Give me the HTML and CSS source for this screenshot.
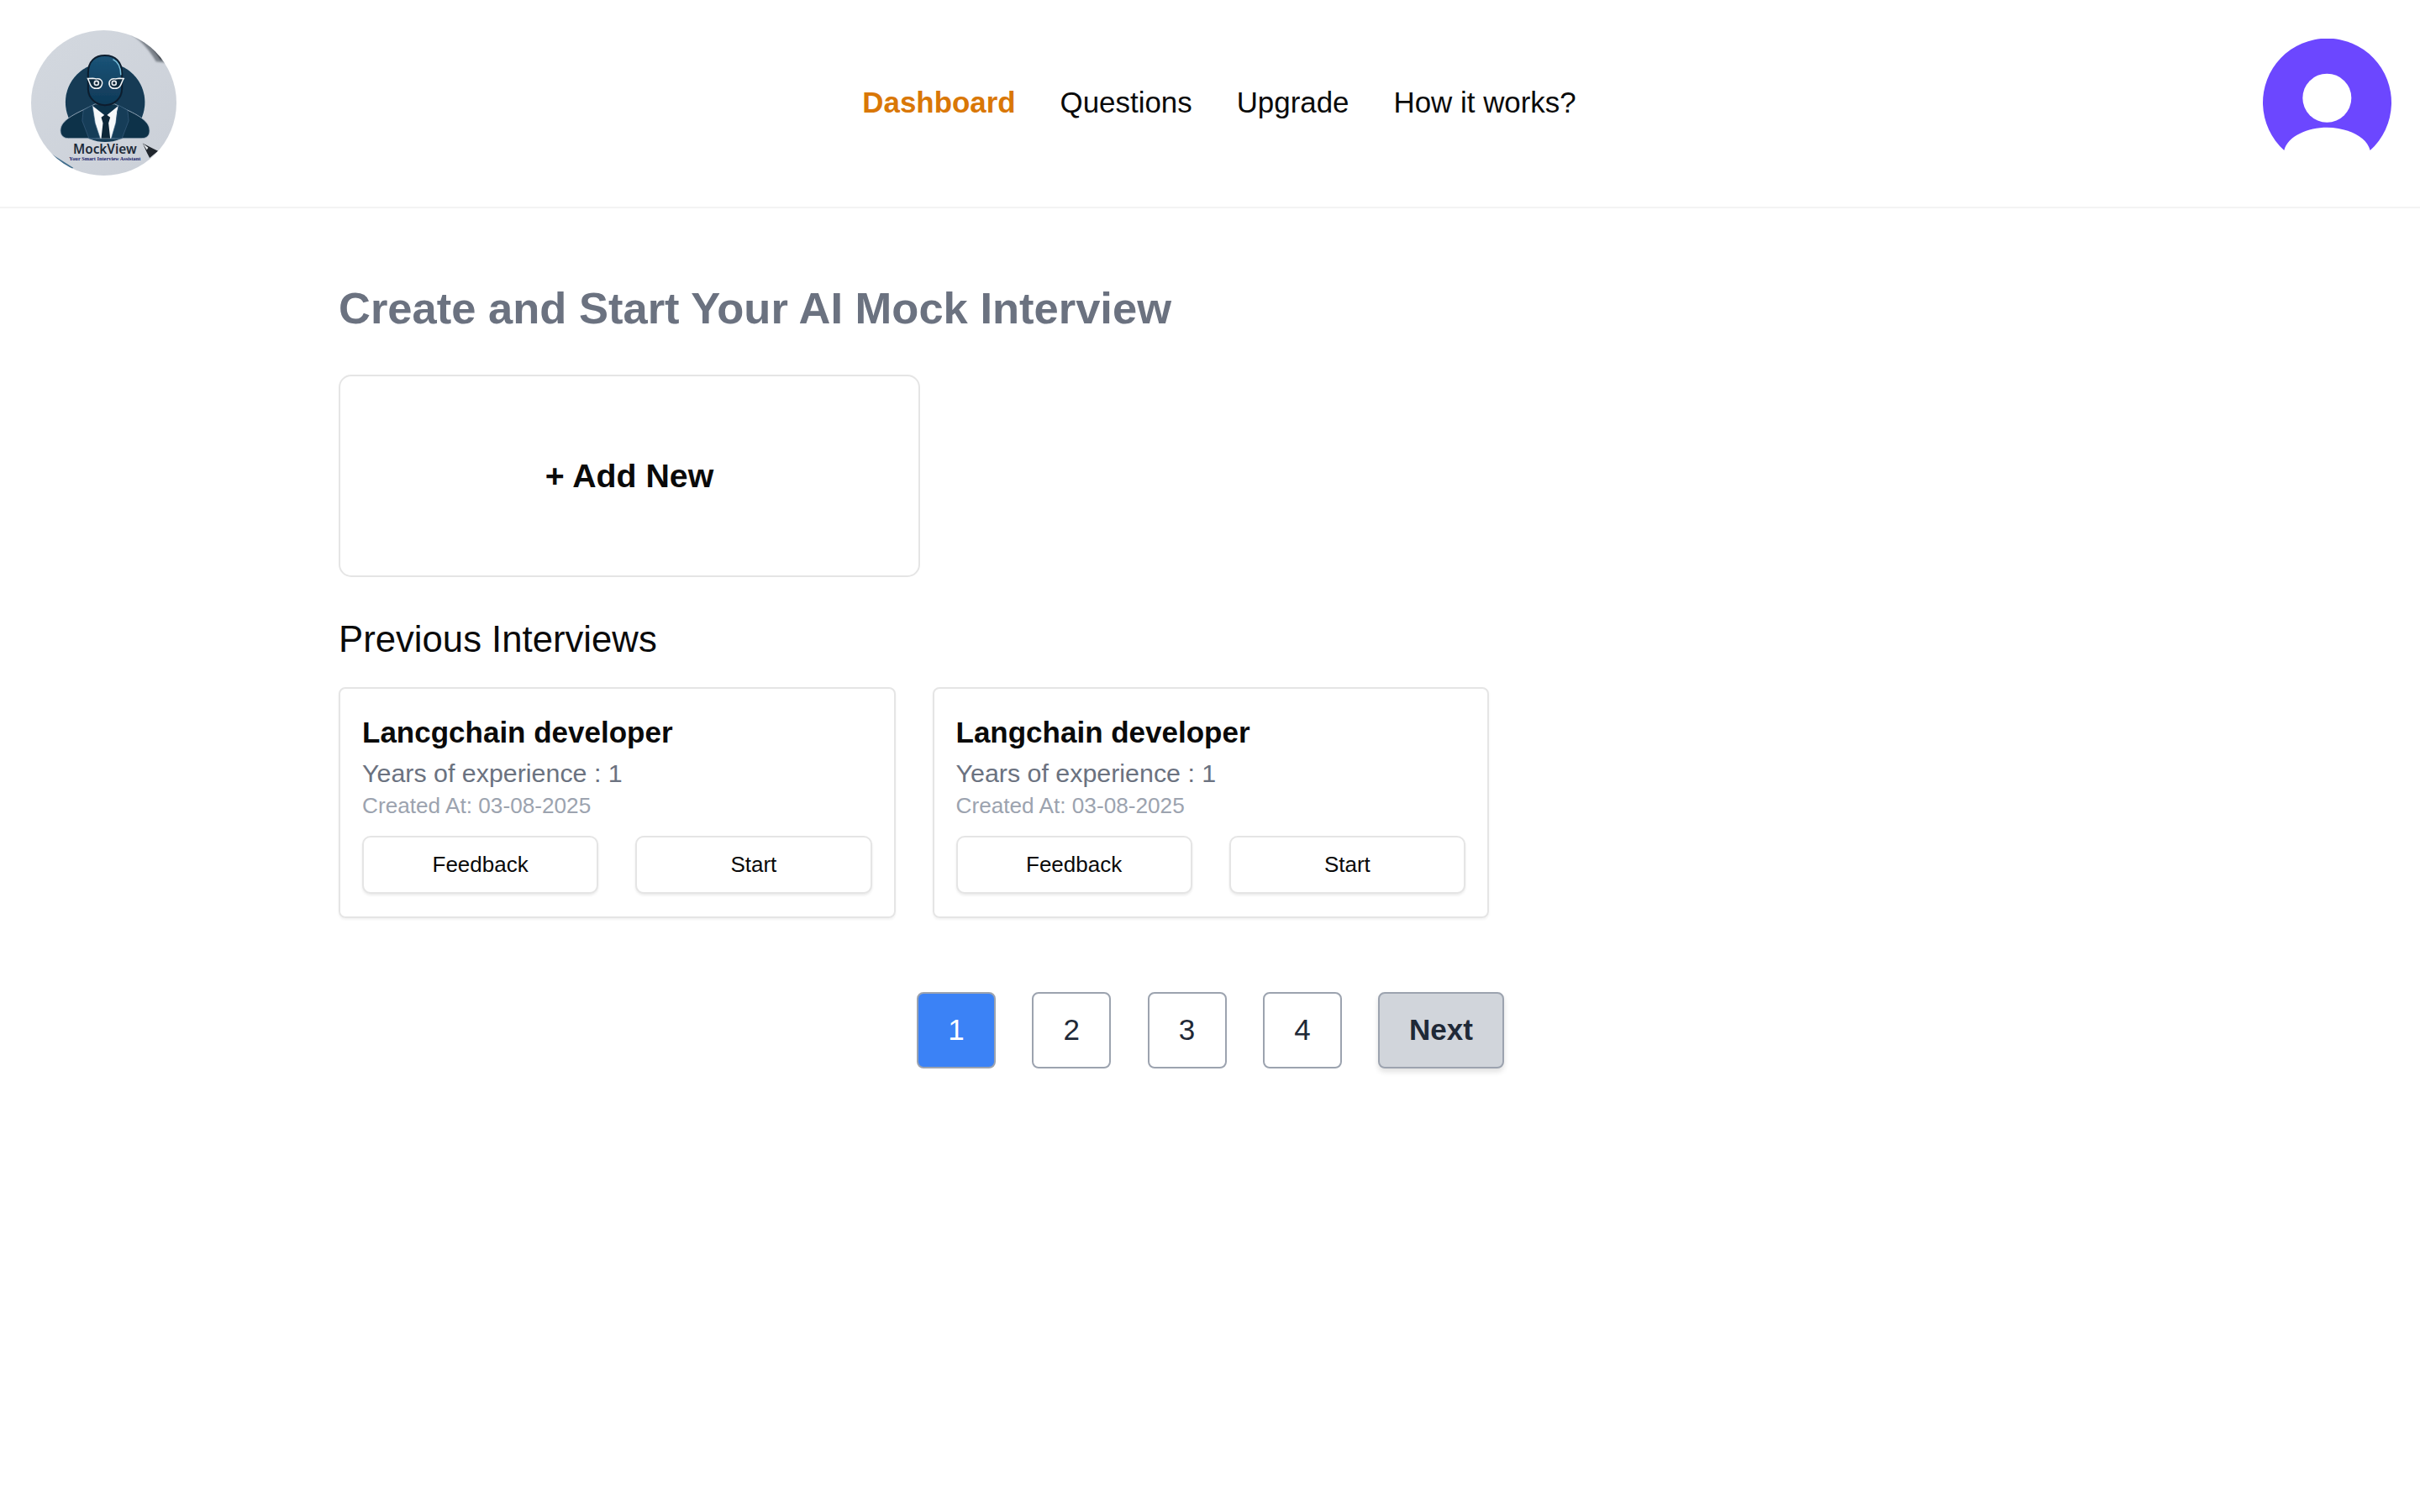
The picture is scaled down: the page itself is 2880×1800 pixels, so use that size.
FILE: index.html
```html
<!DOCTYPE html>
<html lang="en">
<head>
<meta charset="utf-8">
<title>MockView</title>
<link rel="stylesheet" href="styles.css">
</head>
<body>
<header class="header">
  <svg class="logo" viewBox="111 108 520 520" aria-label="MockView logo">
    <defs>
      <clipPath id="logoClip"><circle cx="371" cy="368" r="260"/></clipPath>
      <linearGradient id="paper" x1="0" y1="0" x2="1" y2="1"><stop offset="0" stop-color="#d3d8df"/><stop offset="1" stop-color="#cbd0d8"/></linearGradient>
      <linearGradient id="face" x1="0" y1="0" x2="0" y2="1"><stop offset="0" stop-color="#1b5478"/><stop offset="1" stop-color="#0f3957"/></linearGradient>
      <filter id="soft"><feGaussianBlur stdDeviation="1.2"/></filter>
      <filter id="softer"><feGaussianBlur stdDeviation="3"/></filter>
    </defs>
    <g clip-path="url(#logoClip)">
      <rect x="111" y="108" width="520" height="520" fill="url(#paper)"/>
      <g filter="url(#softer)">
        <path d="M430 104 C480 122 525 160 558 220 L640 230 L640 100 Z" fill="#7c828a"/>
        <path d="M455 104 C505 125 545 165 575 215 L640 200 L640 100 Z" fill="#23282f"/>
      </g>
      <path d="M180 548 L262 600 L254 606 L177 556 Z" fill="#3f6d8c" filter="url(#soft)"/>
      <g filter="url(#soft)">
        <circle cx="376" cy="366" r="142" fill="#123a55"/>
        <path d="M216 468 C216 440 240 420 300 392 L340 372 L410 372 L452 392 C512 420 535 440 535 468 C535 485 525 495 505 495 L245 495 C228 495 216 485 216 468 Z" fill="#10304a" stroke="#a8b9c6" stroke-width="2.5"/>
        <path d="M330 378 L378 415 L424 378 L418 400 L410 495 L343 495 L332 410 Z" fill="#f6f8fa"/>
        <path d="M362 420 L378 408 L394 420 L388 440 L394 495 L362 495 L368 440 Z" fill="#0e2638"/>
        <path d="M298 394 L330 376 L340 440 L358 495 L318 495 L294 432 Z" fill="#163c58" stroke="#3b6280" stroke-width="2"/>
        <path d="M456 394 L424 376 L414 440 L398 495 L436 495 L460 432 Z" fill="#163c58" stroke="#3b6280" stroke-width="2"/>
        <path d="M315 262 C315 218 340 198 375 198 C412 198 436 220 436 262 L436 318 C436 350 410 376 375 376 C342 376 315 350 315 318 Z" fill="url(#face)" stroke="#0b1f2e" stroke-width="6"/>
        <path d="M404 212 C424 222 432 245 432 268" fill="none" stroke="#7cc0dc" stroke-width="4.5"/>
        <path d="M314 281 L332 280 L345 282 C360 279 370 291 363 306 C357 320 333 319 326 308 C320 300 320 292 314 281 Z" fill="#0f2a3e" stroke="#f2f5f7" stroke-width="4.5"/>
        <path d="M442 281 L426 280 L412 282 C396 279 386 291 392 306 C398 320 422 319 429 308 C435 300 435 292 442 281 Z" fill="#0f2a3e" stroke="#f2f5f7" stroke-width="4.5"/>
        <circle cx="345" cy="297" r="10" fill="#e8edf1"/>
        <circle cx="408" cy="297" r="10" fill="#e8edf1"/>
        <circle cx="345" cy="297" r="5" fill="#0e2434"/>
        <circle cx="408" cy="297" r="5" fill="#0e2434"/>
      </g>
      <text class="logo-name" x="375" y="551" text-anchor="middle">MockView</text>
      <text class="logo-tag" x="375" y="574" text-anchor="middle">Your Smart Interview Assistant</text>
      <path d="M510 512 L545 530 L565 540 L535 565 L525 545 Z" fill="#20262d"/>
      <path d="M510 512 L530 528 L525 536 Z" fill="#e8ebee"/>
    </g>
  </svg>
  <nav class="nav">
    <a class="nav-link active">Dashboard</a>
    <a class="nav-link">Questions</a>
    <a class="nav-link">Upgrade</a>
    <a class="nav-link">How it works?</a>
  </nav>
  <svg class="avatar" viewBox="159 78 459 399" aria-label="User avatar">
    <path d="M235 477 A229.5 229.5 0 1 1 542 477 C530 425 455 395 388 395 C322 395 247 425 235 477 Z" fill="#6c47ff"/>
    <circle cx="388" cy="290" r="87" fill="#fff"/>
  </svg>
</header>
<main class="main">
  <h2 class="title">Create and Start Your AI Mock Interview</h2>
  <div class="add-new"><span class="add-label">+ Add New</span></div>
  <h3 class="prev-title">Previous Interviews</h3>
  <section class="cards">
    <article class="card">
      <h4 class="card-title">Lancgchain developer</h4>
      <p class="card-exp">Years of experience : 1</p>
      <p class="card-date">Created At: 03-08-2025</p>
      <div class="card-actions">
        <button class="btn">Feedback</button>
        <button class="btn">Start</button>
      </div>
    </article>
    <article class="card">
      <h4 class="card-title">Langchain developer</h4>
      <p class="card-exp">Years of experience : 1</p>
      <p class="card-date">Created At: 03-08-2025</p>
      <div class="card-actions">
        <button class="btn">Feedback</button>
        <button class="btn">Start</button>
      </div>
    </article>
  </section>
  <div class="pager">
    <button class="page current">1</button>
    <button class="page">2</button>
    <button class="page">3</button>
    <button class="page">4</button>
    <button class="page next">Next</button>
  </div>
</main>
</body>
</html>
```
FILE: styles.css
```css
* { box-sizing: border-box; }
html, body { margin: 0; padding: 0; background: #fff; }
body { font-family: "Liberation Sans", Arial, sans-serif; color: #0a0a0a; min-height: 1800px; }
.header {
  height: 248px;
  padding: 36px 34px 36px 37px;
  display: flex;
  justify-content: space-between;
  align-items: flex-start;
  border-bottom: 2px solid #f3f3f3;
}
.logo { width: 173px; height: 173px; display: block; }
.logo-name { font-family: "Noto Sans", sans-serif; font-weight: 600; font-size: 46px; fill: #1d2a38; }
.logo-tag { font-family: "Liberation Serif", serif; font-weight: 700; font-size: 19px; fill: #17206a; }
.nav { display: flex; gap: 53px; margin-top: 66px; margin-right: 1px; font-size: 34.9px; line-height: 40px; }
.nav-link { color: #0a0a0a; }
.nav-link.active { color: #d97706; font-weight: 700; }
.avatar { width: 153px; height: 133px; margin-top: 10px; display: block; }
.main { padding: 0 403px; }
.title { margin: 89px 0 0; font-size: 52.5px; line-height: 60px; font-weight: 700; color: #6b7280; }
.add-new {
  margin-top: 49px;
  width: 692px;
  height: 241px;
  border: 2px solid #e5e5e5;
  border-radius: 15px;
  display: flex;
  align-items: center;
  justify-content: center;
}
.add-label { font-size: 39.3px; font-weight: 700; color: #0a0a0a; }
.prev-title { margin: 48px 0 0; font-size: 43.7px; line-height: 52px; font-weight: 400; color: #0a0a0a; }
.cards { margin-top: 31px; display: flex; gap: 44px; }
.card {
  width: 662.5px;
  height: 275px;
  padding: 29px 26px;
  border: 2px solid #e5e5e5;
  border-radius: 8px;
  box-shadow: 0 2px 3px rgba(0,0,0,.05);
}
.card-title { margin: 0; font-size: 35px; line-height: 46px; font-weight: 700; color: #0a0a0a; }
.card-exp { margin: 3px 0 0; font-size: 30.4px; line-height: 44px; color: #6b7280; }
.card-date { margin: 0; font-size: 26.2px; line-height: 34px; color: #9ca3af; }
.card-actions { margin-top: 19px; display: flex; gap: 44px; }
.btn {
  flex: 1;
  height: 69px;
  background: #fff;
  border: 2px solid #e5e5e5;
  border-radius: 10px;
  box-shadow: 0 2px 3px rgba(0,0,0,.08);
  font: 400 26px "Liberation Sans", Arial, sans-serif;
  color: #0a0a0a;
}
.pager { margin-top: 88px; margin-left: 688px; display: flex; gap: 43.3px; }
.page {
  width: 94px;
  height: 91px;
  padding: 0 0 2px;
  background: #fff;
  border: 2px solid #9ca3af;
  border-radius: 8px;
  font: 400 35px "Liberation Sans", Arial, sans-serif;
  color: #1f2937;
}
.page.current { background: #3b82f6; color: #fff; }
.page.next { width: 149.5px; background: #d1d5db; font-weight: 700; box-shadow: 0 4px 6px rgba(0,0,0,.12); }
```
